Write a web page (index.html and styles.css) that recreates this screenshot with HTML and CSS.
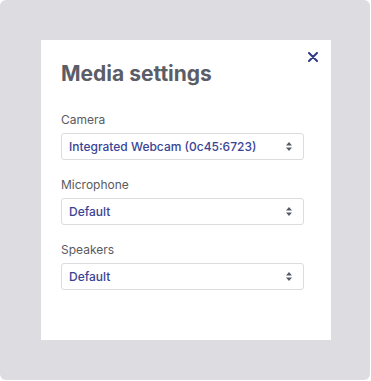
FILE: index.html
```html
<!DOCTYPE html>
<html lang="en">

<head>
    <meta charset="UTF-8">
    <meta name="viewport" content="width=device-width, initial-scale=1.0">
    <title>Media settings</title>
    <link rel="stylesheet" href="styles.css">
</head>

<body>
    <div class="backdrop">
        <div class="dialog">
            <button class="close" aria-label="Close">
                <svg width="10" height="10" viewBox="0 0 10 10">
                    <path d="M1 1 L9 9 M9 1 L1 9" stroke="#2f3a86" stroke-width="2" stroke-linecap="round" />
                </svg>
            </button>
            <h1 class="title">Media settings</h1>

            <div class="field">
                <label class="label">Camera</label>
                <div class="select">
                    <span class="value">Integrated Webcam (0c45:6723)</span>
                    <svg class="arrows" width="6" height="9" viewBox="0 0 6 9">
                        <path d="M3 0 L6 3.5 L0 3.5 Z M3 9 L6 5.5 L0 5.5 Z" fill="#555a66" />
                    </svg>
                </div>
            </div>

            <div class="field">
                <label class="label">Microphone</label>
                <div class="select">
                    <span class="value">Default</span>
                    <svg class="arrows" width="6" height="9" viewBox="0 0 6 9">
                        <path d="M3 0 L6 3.5 L0 3.5 Z M3 9 L6 5.5 L0 5.5 Z" fill="#555a66" />
                    </svg>
                </div>
            </div>

            <div class="field">
                <label class="label">Speakers</label>
                <div class="select">
                    <span class="value">Default</span>
                    <svg class="arrows" width="6" height="9" viewBox="0 0 6 9">
                        <path d="M3 0 L6 3.5 L0 3.5 Z M3 9 L6 5.5 L0 5.5 Z" fill="#555a66" />
                    </svg>
                </div>
            </div>
        </div>
    </div>
</body>

</html>
```

FILE: styles.css
```css
* {
    margin: 0;
    padding: 0;
    box-sizing: border-box;
}

body {
    background-color: #fff;
    font-family: Inter, "Noto Sans", sans-serif;
}

.backdrop {
    width: 370px;
    height: 380px;
    background-color: #dcdce1;
    border-radius: 6px;
    padding: 40px 39px 40px 41px;
}

.dialog {
    position: relative;
    width: 290px;
    height: 300px;
    background-color: #fff;
    padding: 20px 27px 0 20px;
}

.close {
    position: absolute;
    top: 12px;
    right: 13px;
    width: 10px;
    height: 10px;
    border: none;
    background: transparent;
    display: flex;
}

.title {
    font-size: 21px;
    font-weight: 700;
    color: #5b5d67;
    line-height: 28px;
    margin-bottom: 24px;
}

.field {
    margin-bottom: 17px;
}

.label {
    display: block;
    font-size: 12px;
    color: #5a5a5e;
    line-height: 16px;
    margin-bottom: 5px;
}

.select {
    height: 27px;
    border: 1px solid #dcdce0;
    border-radius: 3px;
    display: flex;
    align-items: center;
    justify-content: space-between;
    padding: 0 11px 0 7px;
}

.value {
    font-size: 12px;
    font-weight: 500;
    color: #3a4494;
}
```
